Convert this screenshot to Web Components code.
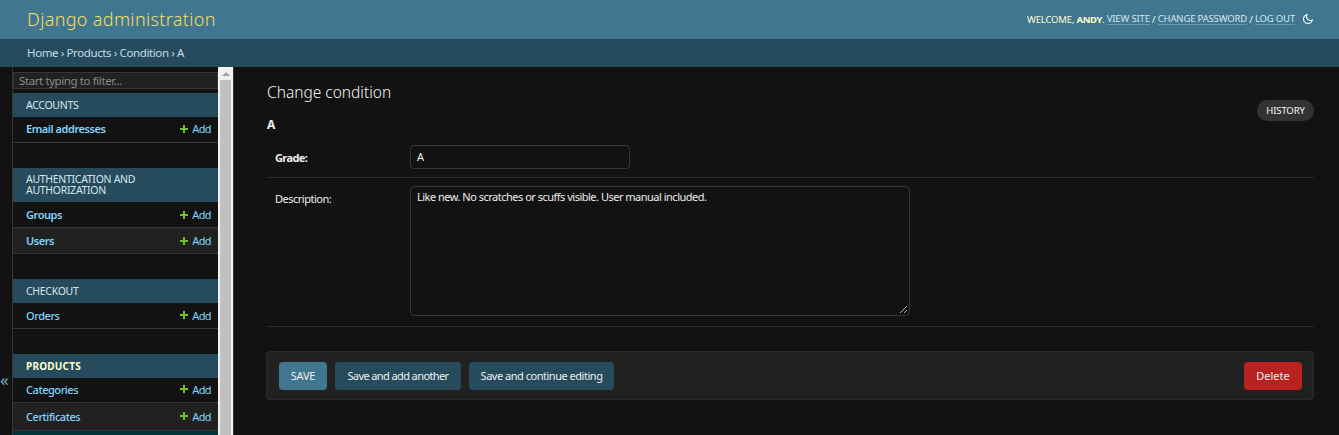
<!DOCTYPE html>
<html><head><meta charset="utf-8">
<style>
html,body{margin:0;height:435px;overflow:hidden;background:#121212}
body{font-family:"Noto Sans","Open Sans",sans-serif;font-size:14px;color:#eee}
</style></head><body>
<template id="t-adm">
<style>
:host{display:flex;flex-direction:column;height:435px;overflow:hidden;background:#121212}
.main{flex:1;display:flex;min-height:0}
.toggle{flex:none;width:13px;box-sizing:border-box;border-right:1px solid #353535;display:flex;align-items:flex-end;justify-content:flex-start;color:#79aec8;font-size:17px;line-height:16px;padding-bottom:47px}
.col{flex:1;min-width:0;padding:0 25px 0 32px}
</style>
<slot name="header"></slot><slot name="crumbs"></slot>
<div class="main"><div class="toggle"><span>«</span></div><slot name="side"></slot><div class="col"><slot></slot></div></div>
</template>
<template id="t-head">
<style>
:host{display:flex;justify-content:space-between;align-items:center;height:39px;background:#417690;padding:0 25px 1px 27px;box-sizing:border-box;flex:none}
.b{font-size:18px;color:#f5dd5d;font-weight:300;letter-spacing:.34px}
.u{display:flex;align-items:center;font-size:9.5px;color:#ffc;letter-spacing:-.17px;text-transform:uppercase}
a{border-bottom:1px solid rgba(255,255,255,.25);color:#d6e6ec;text-decoration:none;line-height:11px}
b{font-weight:700;letter-spacing:-.4px}
svg{margin-left:7px;display:block}
</style>
<div class="b"><slot></slot></div>
<div class="u"><span>Welcome,&nbsp;<b>Andy</b>.&nbsp;</span><a>View site</a>&nbsp;/&nbsp;<a>Change password</a>&nbsp;/&nbsp;<a>Log out</a>
<svg width="12" height="12" viewBox="0 0 24 24" fill="#fff"><path d="M10 7a7 7 0 0 0 12 4.9v.1c0 5.523-4.477 10-10 10S2 17.523 2 12 6.477 2 12 2h.1A6.979 6.979 0 0 0 10 7zm-6 5a8 8 0 0 0 15.062 3.762A9 9 0 0 1 8.238 4.938 7.999 7.999 0 0 0 4 12z"/></svg></div>
</template>
<template id="t-crumbs">
<style>:host{display:block;height:28px;line-height:28px;background:#264b5d;color:#c4dce8;padding-left:27px;font-size:11.5px;letter-spacing:-.39px;flex:none}</style><slot></slot>
</template>
<template id="t-side">
<style>
:host{display:flex;width:220px;flex:none;border-right:1px solid #353535;overflow:hidden;height:368px}
.in{width:205px;padding-top:5px;flex:none}
input{display:block;box-sizing:border-box;width:205px;height:17px;background:#212121;border:1px solid #353535;color:#eee;font:inherit;font-size:11.5px;letter-spacing:-.4px;padding:0 5px;margin:0 0 4px;outline:0;border-radius:0}
input::placeholder{color:#8a8a8a;opacity:1}
.sb{width:15px;flex:none;background:#f1f1f1;display:flex;flex-direction:column;align-items:center}
.tri{width:0;height:0;border:4px solid transparent;border-top:0;border-bottom:4px solid #a3a3a3;margin:5px 0 4px}
.thumb{width:11px;flex:1;background:#c1c1c1}
</style>
<div class="in"><input placeholder="Start typing to filter..."><slot></slot></div>
<div class="sb"><div class="tri"></div><div class="thumb"></div></div>
</template>
<template id="t-app">
<style>
:host{display:block;margin-bottom:25px;font-size:10.5px}
.c{background:#264b5d;color:#d6e6ec;padding:6px 13px;display:flex;align-items:center;min-height:24px;line-height:11px;letter-spacing:-.3px;text-transform:uppercase;box-sizing:border-box}
:host([current]) .c{color:#ffc;font-weight:700;letter-spacing:.2px;font-size:10px}
</style>
<div class="c"><slot name="t"></slot></div><slot></slot>
</template>
<template id="t-row">
<style>
:host{display:flex;justify-content:space-between;align-items:center;height:26px;box-sizing:border-box;padding:0 7px 0 13px;border-bottom:1px solid #353535;font-size:11px;letter-spacing:-.45px;color:#81d4fa;background:#121212}
:host([alt]){background:#212121}
:host([now]){background:#00363a;border:0}
:host([now]) .a{display:none}
:host([lift]){padding-bottom:2px}
b{font-weight:600}
:host([plain]) b{font-weight:500}
.a{display:flex;align-items:center;gap:4px;letter-spacing:-.6px}
svg{display:block}
:host([up]) svg{margin-top:-2px}
</style>
<b><slot></slot></b><span class="a"><svg width="8" height="8" viewBox="0 0 8 8"><path d="M3 0h2v3h3v2H5v3H3V5H0V3h3z" fill="#70bf2b"/></svg>Add</span>
</template>
<template id="t-form">
<style>
:host{display:block;position:relative}
h1{font-size:15.5px;font-weight:300;color:#f5f5f5;margin:0;line-height:20px;padding:15px 0 0 1px}
.hist{position:absolute;right:0;top:33px;height:21px;width:57px;text-align:center;line-height:21px;border-radius:11px;background:#333;color:#f7f7f7;font-size:9.5px;letter-spacing:-.13px}
h2{font-size:12px;font-weight:700;margin:15px 0 0;padding-left:1px;line-height:16px;color:#eee}
.r{display:flex;border-bottom:1px solid #2a2a2a;padding:0 0 10px 9px}
label{width:135px;flex:none;font-size:11px;color:#eee;letter-spacing:-.5px}
.v{background:#121212;border:1px solid #353535;border-radius:4px;color:#eee;box-sizing:border-box;font-size:11px;letter-spacing:-.5px;padding:0 5px 0 6px}
.sub{margin-top:24px;height:49px;background:#212121;border:1px solid #2a2a2a;border-radius:4px;box-sizing:border-box;display:flex;align-items:flex-start;padding:10px 11px 0 12px;gap:8px;font-size:11px}
.btn{height:28px;line-height:28px;border-radius:4px;background:#264b5d;color:#eee;text-align:center}
.s{background:#417690}
.del{margin-left:auto;background:#ba2121}
.grip{position:absolute;right:1px;bottom:1px}
</style>
<h1>Change condition</h1><div class="hist">HISTORY</div>
<h2>A</h2>
<div class="r" style="padding:12px 0 6px 9px"><label style="font-weight:700;line-height:26px;letter-spacing:-.6px">Grade:</label><div class="v" style="width:220px;height:24px;line-height:22px">A</div></div>
<div class="r" style="padding-top:8px"><label style="line-height:26px">Description:</label><div class="v" style="width:500px;height:130px;position:relative;padding-top:2px;line-height:16px">Like new. No scratches or scuffs visible. User manual included.<svg class="grip" width="9" height="9" viewBox="0 0 9 9" stroke="#aaa"><path d="M1 8 8 1M5 8 8 5"/></svg></div></div>
<div class="sub"><span class="btn s" style="width:48px;letter-spacing:-.2px">SAVE</span><span class="btn" style="width:126px;letter-spacing:-.6px">Save and add another</span><span class="btn" style="width:145px;letter-spacing:-.48px">Save and continue editing</span><span class="btn del" style="width:58px">Delete</span></div>
</template>
<dj-admin>
<dj-head slot="header">Django administration</dj-head>
<dj-crumbs slot="crumbs">Home › Products › Condition › A</dj-crumbs>
<dj-side slot="side">
<dj-app><span slot="t">Accounts</span><dj-row lift>Email addresses</dj-row></dj-app>
<dj-app><span slot="t">Authentication and Authorization</span><dj-row>Groups</dj-row><dj-row alt>Users</dj-row></dj-app>
<dj-app><span slot="t">Checkout</span><dj-row plain up>Orders</dj-row></dj-app>
<dj-app current><span slot="t">Products</span><dj-row plain lift style="height:25px">Categories</dj-row><dj-row plain alt up style="height:28px">Certificates</dj-row><dj-row now></dj-row></dj-app>
</dj-side>
<dj-form></dj-form>
</dj-admin>
<script>
for(const [n,t] of [['dj-admin','t-adm'],['dj-head','t-head'],['dj-crumbs','t-crumbs'],['dj-side','t-side'],['dj-app','t-app'],['dj-row','t-row'],['dj-form','t-form']]){
customElements.define(n,class extends HTMLElement{constructor(){super();this.attachShadow({mode:'open'}).append(document.getElementById(t).content.cloneNode(true))}})}
</script>
</body></html>
